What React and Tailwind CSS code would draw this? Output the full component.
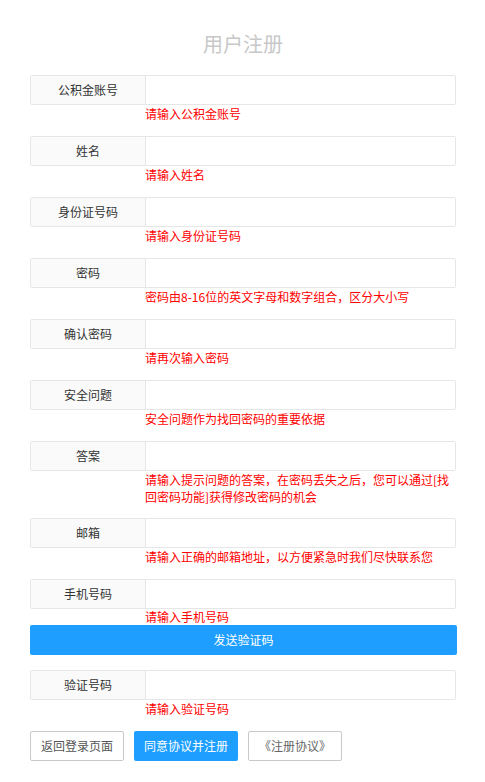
import React from "react";

// registration form fields
const fields = [
  { label: "公积金账号", tip: "请输入公积金账号" },
  { label: "姓名", tip: "请输入姓名" },
  { label: "身份证号码", tip: "请输入身份证号码" },
  { label: "密码", tip: "密码由8-16位的英文字母和数字组合，区分大小写", type: "password" },
  { label: "确认密码", tip: "请再次输入密码", type: "password" },
  { label: "安全问题", tip: "安全问题作为找回密码的重要依据" },
  { label: "答案", tip: "请输入提示问题的答案，在密码丢失之后，您可以通过[找回密码功能]获得修改密码的机会", tight: true },
  { label: "邮箱", tip: "请输入正确的邮箱地址，以方便紧急时我们尽快联系您" },
];

const Row = ({ label, tip, type, tight }) => {
  return (
    <div className={tight ? "mb-[13px]" : "mb-[14px]"}>
      <div className="flex h-[30px] rounded-[2px] border border-[#e6e6e6] bg-white">
        <div className="w-[115px] shrink-0 flex items-center justify-center bg-[#fafafa] border-r border-[#e6e6e6] text-[12px] text-[#333]">
          {label}
        </div>
        <input type={type || "text"} className="flex-1 min-w-0 px-2 text-[12px] outline-none bg-white" />
      </div>
      <p className="pl-[115px] text-[12px] leading-[17px] text-[#ff0000]">{tip}</p>
    </div>
  );
};

const App = () => {
  return (
    <div
      className="min-h-[782px] bg-white"
      style={{ fontFamily: '"Noto Sans CJK SC", "Noto Sans", sans-serif' }}
    >
      <div className="w-[426px] ml-[30px]">
        <h1 className="pt-[30px] mb-[17px] h-[58px] text-center text-[20px] leading-[28px] text-[#c8c8c8] font-normal">
          用户注册
        </h1>

        {fields.map((f, i) => (
          <Row key={i} label={f.label} tip={f.tip} type={f.type} tight={f.tight} />
        ))}

        {/* phone */}
        <div>
          <div className="flex h-[30px] rounded-[2px] border border-[#e6e6e6] bg-white">
            <div className="w-[115px] shrink-0 flex items-center justify-center bg-[#fafafa] border-r border-[#e6e6e6] text-[12px] text-[#333]">
              手机号码
            </div>
            <input className="flex-1 min-w-0 px-2 text-[12px] outline-none" />
          </div>
          <p className="pl-[115px] text-[12px] leading-[16px] text-[#ff0000]">请输入手机号码</p>
        </div>
        <button className="w-[427px] h-[30px] rounded-[2px] bg-[#1e9fff] text-white text-[12px]">
          发送验证码
        </button>

        <div className="mt-[15px]">
          <Row label="验证号码" tip="请输入验证号码" />
        </div>

        <div className="flex gap-[10px]">
          <button className="w-[94px] h-[30px] rounded-[2px] border border-[#c9c9c9] bg-white text-[12px] text-[#555]">
            返回登录页面
          </button>
          <button className="w-[104px] h-[30px] rounded-[2px] bg-[#1e9fff] text-white text-[12px]">
            同意协议并注册
          </button>
          <button className="w-[94px] h-[30px] rounded-[2px] border border-[#c9c9c9] bg-white text-[12px] text-[#666]">
            《注册协议》
          </button>
        </div>
      </div>
    </div>
  );
};

export default App;
